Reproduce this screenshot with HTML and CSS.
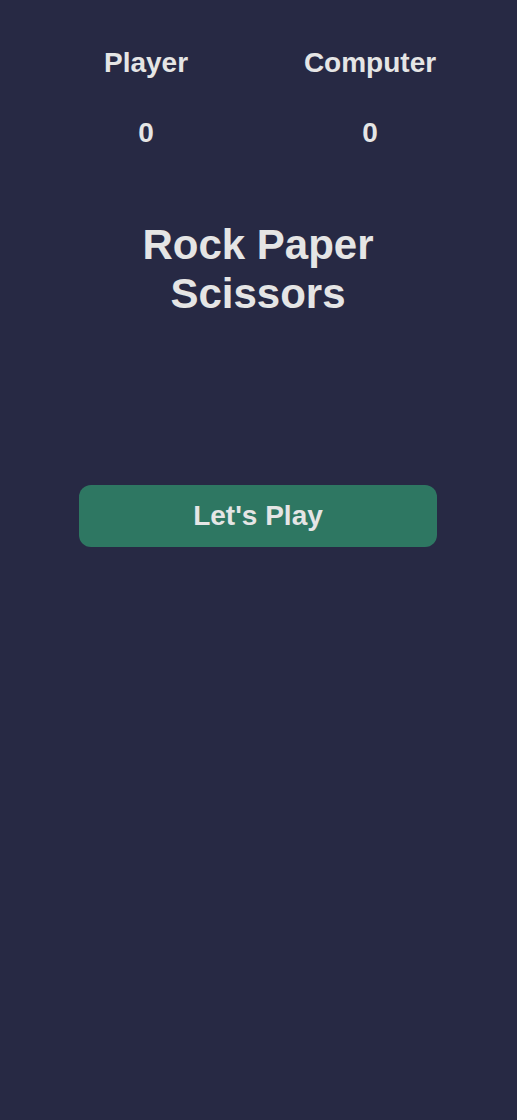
FILE: index.html
```html
<!DOCTYPE html>
<html lang="en">
<head>
<meta charset="utf-8">
<title>Rock Paper Scissors</title>
<link rel="stylesheet" href="styles.css">
</head>
<body>
<main class="app">
  <section class="scoreboard">
    <div class="score">
      <h2 class="score-label">Player</h2>
      <p class="score-value">0</p>
    </div>
    <div class="score">
      <h2 class="score-label">Computer</h2>
      <p class="score-value">0</p>
    </div>
  </section>
  <h1 class="title">Rock Paper<br>Scissors</h1>
  <button class="play-btn" type="button">Let's Play</button>
</main>
</body>
</html>
```
FILE: styles.css
```css
html, body {
  margin: 0;
  padding: 0;
}
body {
  background: #272944;
  color: #e5e5e5;
  font-family: "Liberation Sans", Arial, sans-serif;
  min-height: 1120px;
}
.app {
  display: flex;
  flex-direction: column;
  align-items: center;
  padding-top: 47px;
  padding-right: 1px;
}
.scoreboard {
  display: grid;
  grid-template-columns: 1fr 1fr;
  width: 448px;
}
.score {
  display: flex;
  flex-direction: column;
  align-items: center;
}
.score-label,
.score-value {
  margin: 0;
  font-size: 28px;
  font-weight: bold;
  line-height: 32px;
}
.score-value {
  margin-top: 38px;
}
.title {
  margin: 71px 0 0;
  font-size: 42px;
  line-height: 49px;
  font-weight: bold;
  text-align: center;
}
.play-btn {
  margin-top: 167px;
  width: 358px;
  height: 62px;
  border: none;
  border-radius: 12px;
  background: #2e7762;
  color: #e5e5e5;
  font-family: "Liberation Sans", Arial, sans-serif;
  font-size: 28px;
  font-weight: bold;
  cursor: pointer;
}
```
